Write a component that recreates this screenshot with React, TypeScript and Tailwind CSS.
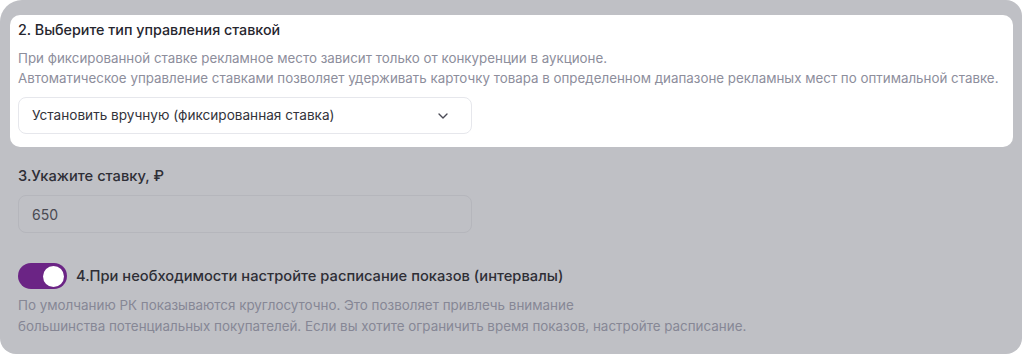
import { ChevronDown } from "lucide-react";

export default function App() {
  return (
    <div className="w-[1024px] h-[356px] bg-white font-['Inter',sans-serif]">
      <div className="w-[1022px] h-[354px] bg-[#bfc0c5] rounded-tl-[22px] rounded-tr-[16px] rounded-b-[16px] pt-[15px] px-[10px]">
        <div className="bg-white rounded-[10px] w-[1003px] h-[132px] px-[8px] pt-[5px]">
          <h3 className="text-[14.3px] font-medium text-[#26262e] leading-[20px]">
            2. Выберите тип управления ставкой
          </h3>
          <p className="mt-[8px] text-[13.35px] leading-[20px] text-[#8d8e9c]">
            При фиксированной ставке рекламное место зависит только от конкуренции в аукционе.
            <br />
            Автоматическое управление ставками позволяет удерживать карточку товара в определенном диапазоне рекламных мест по оптимальной ставке.
          </p>
          <div className="mt-[9px] w-[454px] h-[37px] border border-[#e6e7ec] rounded-[8px] flex items-center justify-between pl-[13px] pr-[20px]">
            <span className="text-[13.6px] text-[#33333b]">Установить вручную (фиксированная ставка)</span>
            <ChevronDown size={16} strokeWidth={2} className="text-[#4a4a55]" />
          </div>
        </div>

        <div className="px-[8px]">
          <h3 className="mt-[19px] text-[14.7px] font-medium text-[#2e2e36] leading-[20px]">
            3.Укажите ставку, ₽
          </h3>
          <div className="mt-[9px] w-[454px] h-[38px] border border-[#b5b6bc] rounded-[8px] flex items-center pl-[13px]">
            <span className="text-[14px] text-[#4a4a53]">650</span>
          </div>

          <div className="mt-[30px] flex items-center gap-[9px]">
            <div className="w-[49px] h-[26px] rounded-full bg-[#6b2485] flex items-center justify-end pr-[3px]">
              <div className="w-[21px] h-[21px] rounded-full bg-white" />
            </div>
            <span className="text-[14.7px] font-medium text-[#2e2e36]">
              4.При необходимости настройте расписание показов (интервалы)
            </span>
          </div>
          <p className="mt-[6px] text-[13.4px] leading-[21px] text-[#868795]">
            По умолчанию РК показываются круглосуточно. Это позволяет привлечь внимание
            <br />
            большинства потенциальных покупателей. Если вы хотите ограничить время показов, настройте расписание.
          </p>
        </div>
      </div>
    </div>
  );
}
